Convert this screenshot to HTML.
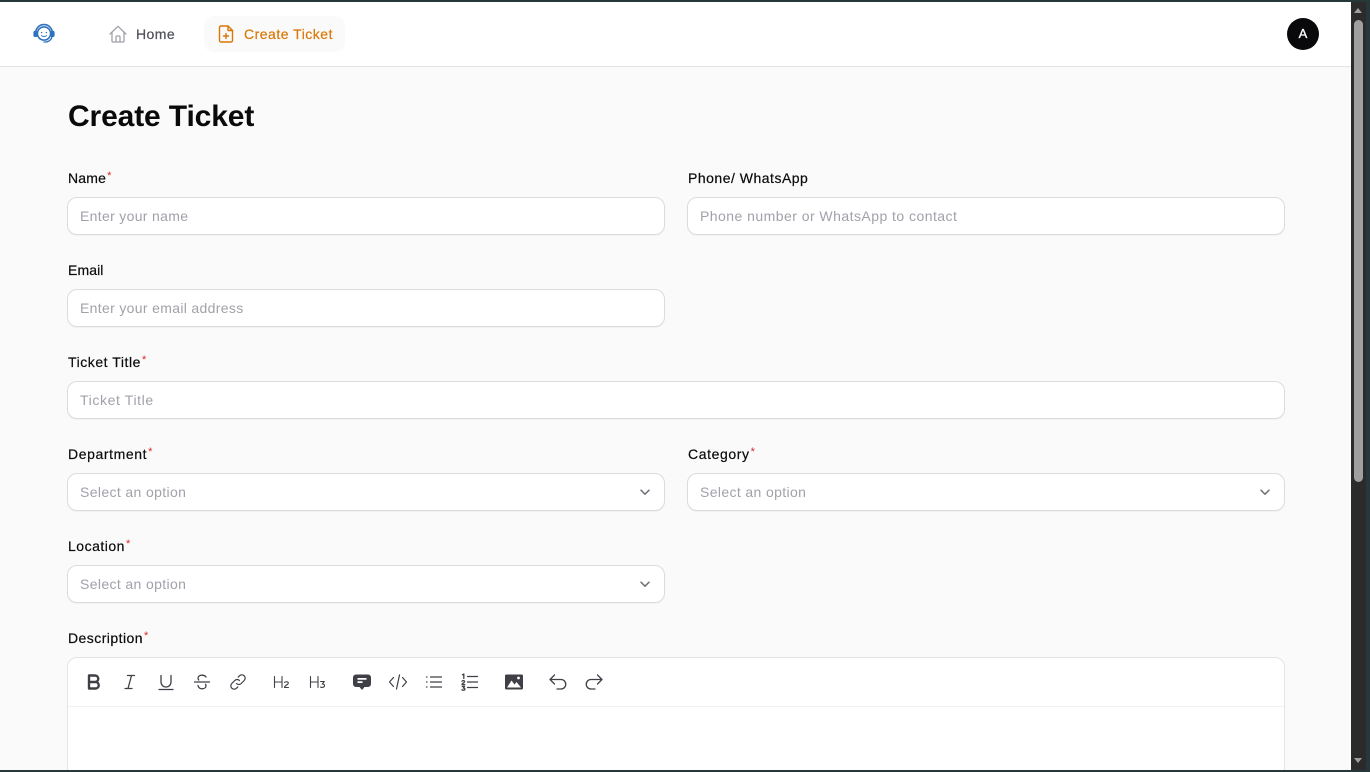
<!DOCTYPE html>
<html><head><meta charset="utf-8">
<style>
html,body{margin:0;padding:0;width:1370px;height:772px;overflow:hidden;background:#fafafa;font-family:"Liberation Sans",sans-serif}
#w{position:relative;width:1370px;height:772px;overflow:hidden}
.a{position:absolute}
.lab{position:absolute;left:68px;font-size:14px;line-height:20px;color:#0a0a0a;font-weight:400;-webkit-text-stroke:.2px #0a0a0a;white-space:nowrap}
.lab i{font-style:normal;color:#e02424;font-size:11px;position:relative;top:-4px;-webkit-text-stroke:0;margin-left:1px;letter-spacing:0}
.inp{position:absolute;height:36px;background:#fff;border:1px solid #dcdcdf;border-radius:10px;box-shadow:0 1px 1px rgba(0,0,0,.04);font-size:14px;line-height:36px;color:#a1a1aa;letter-spacing:.35px;box-sizing:content-box;padding-left:12px;white-space:nowrap}
.w1{left:67px;width:584px}
.w2{left:687px;width:584px}
.chev{position:absolute;right:12px;top:11px}
svg.t{position:absolute;top:672px;width:20px;height:20px;fill:none;stroke:#3f3f46;stroke-linecap:round;stroke-linejoin:round}
</style></head><body>
<div id="w">

<div class="a" style="left:0;top:0;width:1370px;height:2px;background:#27383a"></div>
<div class="a" style="left:0;top:2px;width:1351px;height:64px;background:#fff;border-bottom:1px solid #e4e4e7"></div>

<svg class="a" style="left:32px;top:22px" width="24" height="24" viewBox="0 0 24 24" fill="none" stroke="#2f72bd" stroke-width="1.6" stroke-linecap="round">
<circle cx="12" cy="11.500" r="6.600"/>
<path d="M3.600 11a8.400 8.400 0 0 1 16.800 0"/>
<rect x="2.200" y="9.600" width="2.400" height="4.600" rx="1" fill="#2f72bd"/>
<rect x="19.400" y="9.600" width="2.400" height="4.600" rx="1" fill="#2f72bd"/>
<path d="M20 14c0 3-2.500 5.500-6 6h-2" stroke-width="1.300"/>
<circle cx="9.600" cy="10.600" r=".7" fill="#2f72bd" stroke="none"/>
<circle cx="14.400" cy="10.600" r=".7" fill="#2f72bd" stroke="none"/>
<path d="M9.500 13.600c1.400 1.200 3.600 1.200 5 0" stroke-width="1"/>
</svg>

<svg class="a" style="left:108px;top:24px" width="20" height="20" viewBox="0 0 20 20" fill="none" stroke="#a1a1aa" stroke-width="1.300" stroke-linecap="round" stroke-linejoin="round">
<path d="M2 10 10 2.300 18 10"/>
<path d="M4 8.300V17a1 1 0 0 0 1 1h10a1 1 0 0 0 1-1V8.300"/>
<path d="M8 18v-5a1 1 0 0 1 1-1h2a1 1 0 0 1 1 1v5"/>
</svg>
<div class="a" style="left:136px;top:24px;font-size:14px;line-height:20px;color:#52525b;letter-spacing:.45px;-webkit-text-stroke:.25px #52525b">Home</div>

<div class="a" style="left:204px;top:16px;width:141px;height:36px;background:#fafafa;border-radius:10px"></div>
<svg class="a" style="left:216px;top:24px" width="20" height="20" viewBox="0 0 20 20" fill="none" stroke="#d97706" stroke-width="1.400" stroke-linecap="round" stroke-linejoin="round">
<path d="M12 2H5a1.500 1.500 0 0 0-1.500 1.500v13A1.500 1.500 0 0 0 5 18h10a1.500 1.500 0 0 0 1.500-1.500V6.500z"/>
<path d="M12 2v4.500h4.500"/>
<path d="M10 9.500v5M7.500 12h5"/>
</svg>
<div class="a" style="left:244px;top:24px;font-size:14px;line-height:20px;color:#d97706;letter-spacing:.5px;-webkit-text-stroke:.2px #d97706;white-space:nowrap">Create Ticket</div>

<div class="a" style="left:1287px;top:18px;width:32px;height:32px;border-radius:50%;background:#09090b;color:#fff;font-size:13px;font-weight:400;-webkit-text-stroke:.3px #fff;line-height:32px;text-align:center">A</div>

<div class="a" style="left:68px;top:99px;font-size:30px;line-height:36px;font-weight:700;color:#0a0a0a;letter-spacing:-.13px;white-space:nowrap">Create Ticket</div>

<div class="lab" style="top:168px;letter-spacing:.2px">Name<i>*</i></div>
<div class="inp w1" style="top:197px;letter-spacing:.32px">Enter your name</div>
<div class="lab" style="top:168px;left:688px;letter-spacing:.5px">Phone/ WhatsApp</div>
<div class="inp w2" style="top:197px;letter-spacing:.46px">Phone number or WhatsApp to contact</div>

<div class="lab" style="top:260px;letter-spacing:.1px">Email</div>
<div class="inp w1" style="top:289px;letter-spacing:.33px">Enter your email address</div>

<div class="lab" style="top:352px;letter-spacing:.55px">Ticket Title<i>*</i></div>
<div class="inp" style="top:381px;left:67px;width:1204px;letter-spacing:.62px">Ticket Title</div>

<div class="lab" style="top:444px;letter-spacing:.6px">Department<i>*</i></div>
<div class="inp w1" style="top:473px;letter-spacing:.37px">Select an option
<svg class="chev" width="14" height="14" viewBox="0 0 14 14" fill="none" stroke="#71717a" stroke-width="1.500" stroke-linecap="round" stroke-linejoin="round"><path d="M3 5.200 7 9.200 11 5.200"/></svg></div>
<div class="lab" style="top:444px;left:688px;letter-spacing:.6px">Category<i>*</i></div>
<div class="inp w2" style="top:473px;letter-spacing:.37px">Select an option
<svg class="chev" width="14" height="14" viewBox="0 0 14 14" fill="none" stroke="#71717a" stroke-width="1.500" stroke-linecap="round" stroke-linejoin="round"><path d="M3 5.200 7 9.200 11 5.200"/></svg></div>

<div class="lab" style="top:536px;letter-spacing:.5px">Location<i>*</i></div>
<div class="inp w1" style="top:565px;letter-spacing:.37px">Select an option
<svg class="chev" width="14" height="14" viewBox="0 0 14 14" fill="none" stroke="#71717a" stroke-width="1.500" stroke-linecap="round" stroke-linejoin="round"><path d="M3 5.200 7 9.200 11 5.200"/></svg></div>

<div class="lab" style="top:628px;letter-spacing:.45px">Description<i>*</i></div>
<div class="a" style="left:67px;top:657px;width:1216px;height:130px;background:#fff;border:1px solid #e4e4e7;border-radius:10px"></div>
<div class="a" style="left:68px;top:706px;width:1216px;height:1px;background:#f1f1f3"></div>

<svg class="t" style="left:84px;stroke-width:2.400" viewBox="0 0 20 20"><path d="M5 3.500h6a3.200 3.200 0 0 1 0 6.500H5zM5 10h7a3.300 3.300 0 0 1 0 6.500H5z"/></svg>
<svg class="t" style="left:120px;stroke-width:1.300" viewBox="0 0 20 20"><path d="M7.500 3.500h7M5 16.500h7M11.500 3.500l-3.500 13"/></svg>
<svg class="t" style="left:156px;stroke-width:1.300" viewBox="0 0 20 20"><path d="M5 3.500V10a5 5 0 0 0 10 0V3.500M3 17.500h14"/></svg>
<svg class="t" style="left:192px;stroke-width:1.300" viewBox="0 0 20 20"><path d="M2.500 10h15M14 5c-.8-1.200-2.200-1.800-4-1.800-2.400 0-4 1.200-4 3 0 .8.300 1.400.8 1.800M6 13.500c.5 2 2 3.300 4 3.300 2.400 0 4-1.300 4-3.100 0-.5-.1-1-.4-1.400"/></svg>
<svg class="t" style="left:228px;stroke-width:1.200" viewBox="0 0 20 20"><path d="M8.500 11.500a3.300 3.300 0 0 0 4.700 0l3-3a3.300 3.300 0 0 0-4.700-4.700l-1.300 1.300"/><path d="M11.500 8.500a3.300 3.300 0 0 0-4.700 0l-3 3a3.300 3.300 0 0 0 4.700 4.700l1.300-1.300"/></svg>
<svg class="t" style="left:272px;stroke-width:1.100" viewBox="0 0 20 20"><path d="M2.500 4.500v11M10 4.500v11M2.500 10H10M12.500 10.500c.5-1 3.800-1.200 3.800.6 0 1.700-3.800 2.200-3.800 4.400h4"/></svg>
<svg class="t" style="left:308px;stroke-width:1.100" viewBox="0 0 20 20"><path d="M2.500 4.500v11M10 4.500v11M2.500 10H10M12.500 9.500h3.800l-2 2.500c1.500 0 2.200.7 2.200 1.700 0 1.500-2.800 2.300-4 1.300"/></svg>
<svg class="t" style="left:352px" viewBox="0 0 20 20" stroke="none"><path style="stroke:none" fill="#3f3f46" d="M4 2.500h12A3 3 0 0 1 19 5.500v6.500a3 3 0 0 1-3 3h-3.500L10 18l-2.500-3H4a3 3 0 0 1-3-3V5.500a3 3 0 0 1 3-3z"/><path style="stroke:none" fill="#fff" d="M5.500 6h9v1.700h-9zM5.500 9.300h5V11h-5z"/></svg>
<svg class="t" style="left:388px;stroke-width:1.200" viewBox="0 0 20 20"><path d="M5.500 5.500 1.500 10l4 4.500M14.500 5.500l4 4.500-4 4.500M11.500 3l-3 14"/></svg>
<svg class="t" style="left:424px;stroke-width:1.200" viewBox="0 0 20 20"><path d="M6.500 5h11M6.500 10h11M6.500 15h11M2.500 5h.5M2.500 10h.5M2.500 15h.5"/></svg>
<svg class="t" style="left:460px;stroke-width:1.200" viewBox="0 0 20 20"><path d="M7.500 4.500h10M7.500 10h10M7.500 15.500h10"/><path style="stroke-width:1.300" d="M2.500 2.800 3.800 2v4.500M2 9.200c.5-.9 2.800-.8 2.600.5-.1 1-2.600 1.500-2.600 2.800h2.800M2.200 14.300h2.400L3.200 16c1.300 0 1.700.5 1.700 1.200 0 1-2 1.300-2.900.6"/></svg>
<svg class="t" style="left:504px" viewBox="0 0 20 20"><path style="stroke:none" fill="#3f3f46" d="M2.500 2.500h15A1.500 1.500 0 0 1 19 4v12a1.500 1.500 0 0 1-1.500 1.500h-15A1.500 1.500 0 0 1 1 16V4a1.500 1.500 0 0 1 1.500-1.500z"/><path style="stroke:none" fill="#fff" d="M3 15.500 7.500 8.500l3 4 2-2.500 4.500 5.500z"/><circle style="stroke:none" cx="14.500" cy="6" r="1.400" fill="#fff"/></svg>
<svg class="t" style="left:548px;stroke-width:1.300" viewBox="0 0 20 20"><path d="M6.500 3 2 7.500 6.500 12M2 7.500h11a4.700 4.700 0 0 1 0 9.500H9"/></svg>
<svg class="t" style="left:584px;stroke-width:1.300" viewBox="0 0 20 20"><path d="M13.500 3 18 7.500 13.500 12M18 7.500H7a4.700 4.700 0 0 0 0 9.500h4"/></svg>

<div class="a" style="left:1351px;top:2px;width:15px;height:768px;background:#2b2b2b"></div>
<div class="a" style="left:1354px;top:20px;width:9px;height:462px;background:#9f9f9f;border-radius:5px"></div>
<div class="a" style="left:1354px;top:8px;width:0;height:0;border-left:4.500px solid transparent;border-right:4.500px solid transparent;border-bottom:5px solid #9f9f9f"></div>
<div class="a" style="left:1354px;top:758px;width:0;height:0;border-left:4.500px solid transparent;border-right:4.500px solid transparent;border-top:5px solid #9f9f9f"></div>
<div class="a" style="left:1366px;top:0;width:4px;height:772px;background:#27383a"></div>
<div class="a" style="left:0;top:770px;width:1370px;height:2px;background:#27383a"></div>
</div>
</body></html>
